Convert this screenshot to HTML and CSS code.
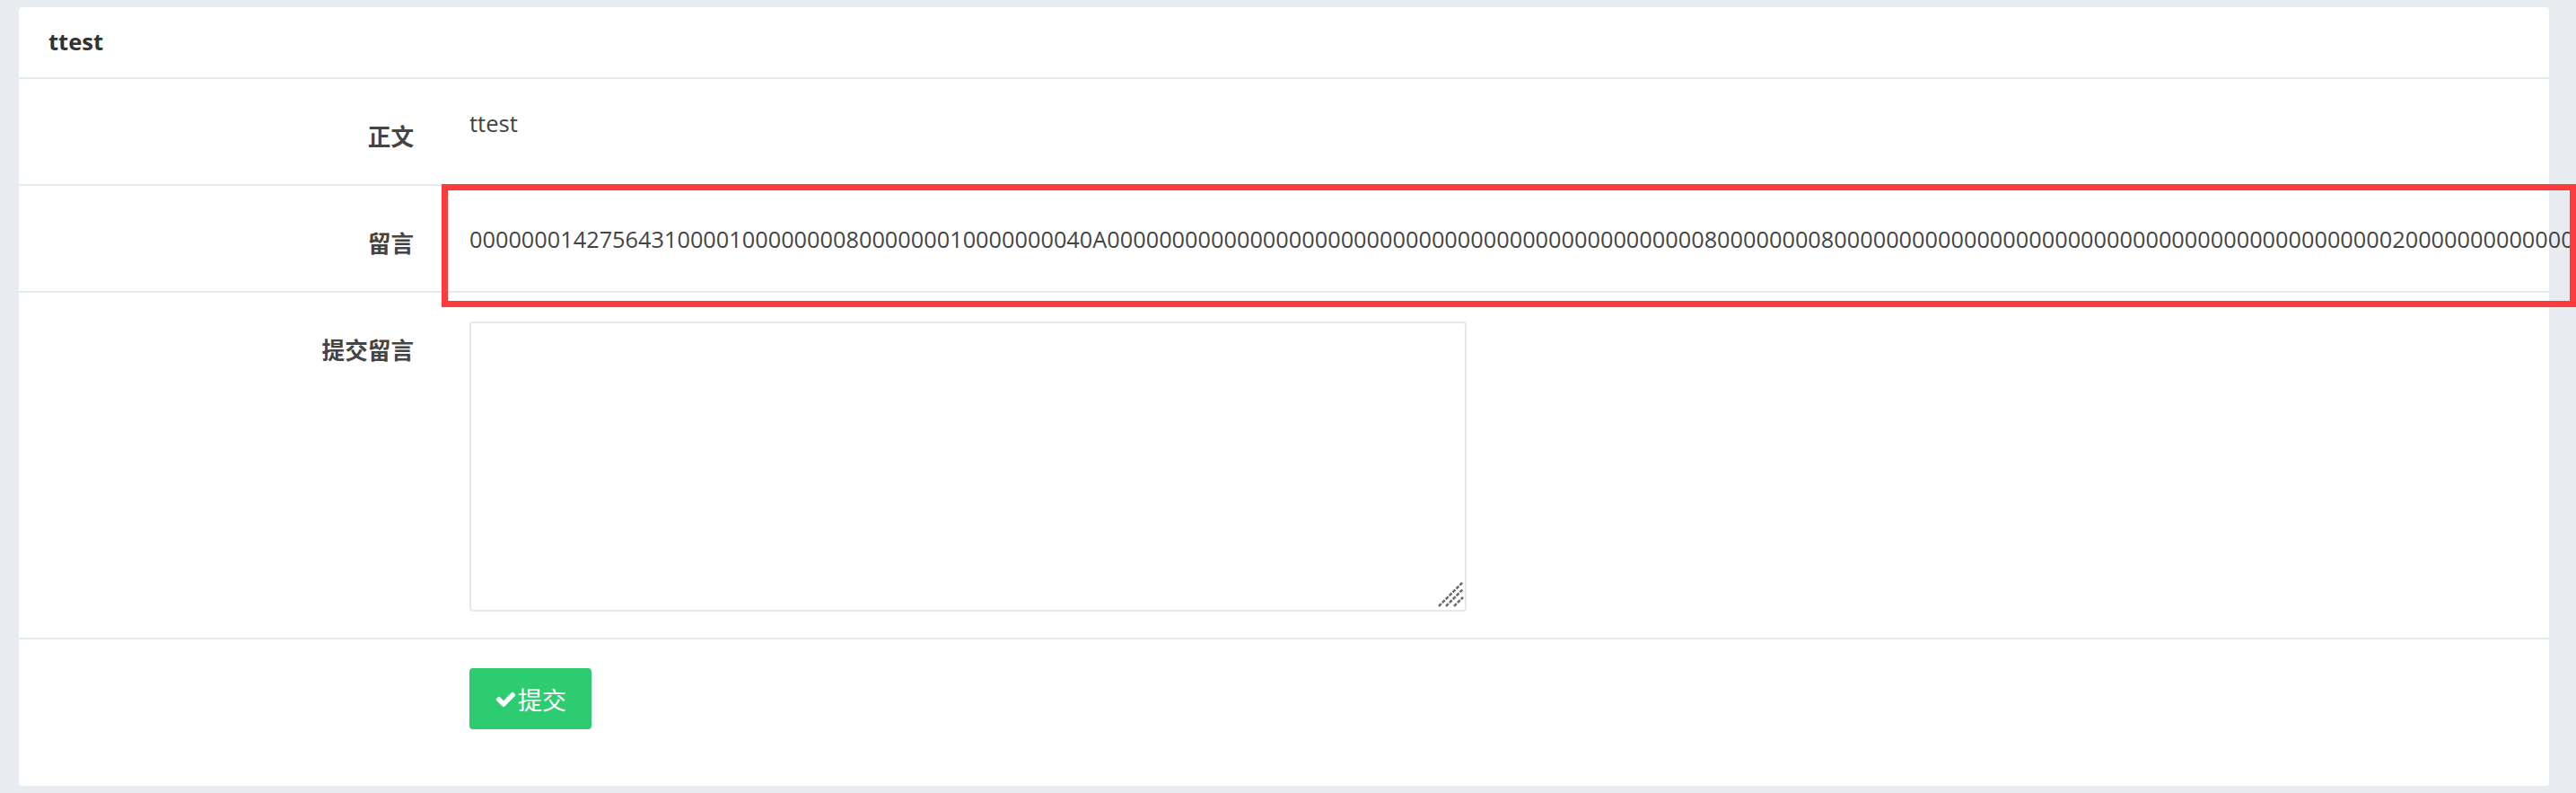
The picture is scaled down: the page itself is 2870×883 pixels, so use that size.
FILE: index.html
```html
<!DOCTYPE html>
<html lang="zh-CN">
<head>
<meta charset="utf-8">
<title>ttest</title>
<link rel="stylesheet" href="styles.css">
</head>
<body>
<div class="page">
  <div class="panel">
    <div class="panel-heading">ttest</div>
    <div class="panel-body">
      <div class="row">
        <div class="label">正文</div>
        <div class="value">ttest</div>
      </div>
      <div class="row">
        <div class="label">留言</div>
        <div class="value comment">000000014275643100001000000008000000010000000040A0000000000000000000000000000000000000000000000800000000800000000000000000000000000000000000000000002000000000000000000</div>
      </div>
      <div class="row">
        <div class="label">提交留言</div>
        <div class="value">
          <div class="ta-wrap">
            <textarea class="ta"></textarea>
            <svg class="grip" width="30" height="30" viewBox="0 0 30 30">
              <line x1="2" y1="28" x2="29" y2="1" />
              <line x1="10" y1="28" x2="29" y2="9" />
              <line x1="19" y1="28" x2="29" y2="18" />
            </svg>
          </div>
        </div>
      </div>
      <div class="row last">
        <div class="label"></div>
        <div class="value">
          <button class="btn-submit" type="button"><svg class="check" width="25" height="25" viewBox="0 0 1792 1792"><path d="M1671 566q0 40-28 68l-724 724-136 136q-28 28-68 28t-68-28l-136-136-362-362q-28-28-28-68t28-68l136-136q28-28 68-28t68 28l294 295 656-657q28-28 68-28t68 28l136 136q28 28 28 68z"/></svg><span>提交</span></button>
        </div>
      </div>
    </div>
  </div>
</div>
<div class="annot"></div>
</body>
</html>
```
FILE: styles.css
```css
html, body {
  margin: 0;
  padding: 0;
  overflow: hidden;
}
body {
  background: #e8ecf0;
  font-family: "Open Sans", "Noto Sans CJK SC", sans-serif;
  font-size: 25.6px;
  line-height: 1.43;
  color: #444;
  width: 2870px;
  height: 883px;
  position: relative;
}
.page {
  padding: 8px 30px 8px 21px;
}
.panel {
  background: #fff;
  border-radius: 4px;
  height: 867px;
}
.panel-heading {
  height: 78px;
  padding: 0 33px;
  display: flex;
  align-items: center;
  font-weight: 700;
  color: #333;
  border-bottom: 2px solid #e7ebf1;
}
.row {
  display: flex;
  padding: 32px 0 33px;
  border-bottom: 2px solid #e7ebf1;
}
.row.last {
  border-bottom: none;
  padding-bottom: 0;
}
.label {
  flex: none;
  width: 440px;
  text-align: right;
  padding-top: 15px;
  font-weight: 700;
  color: #444;
  height: 37px;
}
.value {
  margin-left: 62px;
  white-space: nowrap;
  color: #444;
}
.comment {
  padding-top: 9px;
  font-size: 25.3px;
}
.row:nth-child(3) {
  padding-bottom: 29px;
}
.ta-wrap {
  position: relative;
  width: 1111px;
  height: 323px;
}
.ta {
  display: block;
  box-sizing: border-box;
  width: 1111px;
  height: 323px;
  margin: 0;
  border: 2px solid #e4e8ee;
  border-radius: 4px;
  resize: none;
  outline: none;
  background: #fff;
}
.grip {
  position: absolute;
  right: 3px;
  bottom: 4px;
}
.grip line {
  stroke: #6e6e6e;
  stroke-width: 2.6;
  stroke-dasharray: 4 1.5;
}
.btn-submit {
  display: inline-flex;
  align-items: center;
  box-sizing: border-box;
  width: 136px;
  height: 68px;
  padding: 0 0 0 28px;
  border: none;
  border-radius: 4px;
  background: #2ecc71;
  color: #fff;
  font-family: "Open Sans", "Noto Sans CJK SC", sans-serif;
  font-size: 27px;
}
.check {
  fill: #fff;
  margin-right: 1px;
}
.annot {
  position: absolute;
  left: 492px;
  top: 205px;
  width: 2378px;
  height: 137px;
  box-sizing: border-box;
  border: 7px solid #fd3b3b;
  pointer-events: none;
}
```
